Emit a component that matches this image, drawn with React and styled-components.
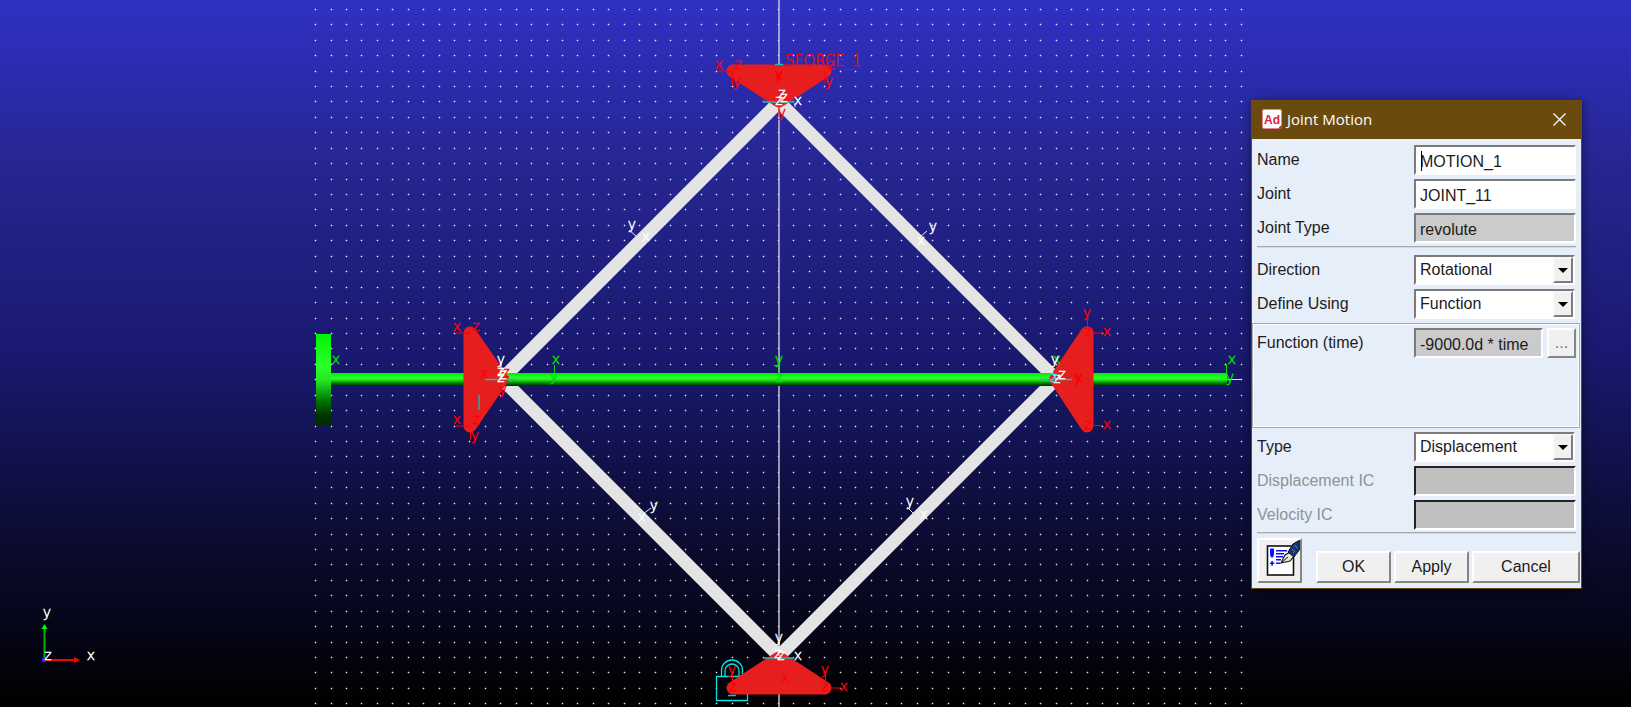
import React, { useId } from 'react';
import styled, { createGlobalStyle } from 'styled-components';

const GlobalStyle = createGlobalStyle`
  * { box-sizing: border-box; }
  body { margin: 0; background: #000; }
`;

const sans = '"Liberation Sans", Arial, sans-serif';

const Workspace = styled.main`
  position: relative;
  min-height: 100vh;
  background: linear-gradient(#3030c4 0%, #25258f 25%, #191970 50%, #0c0c34 75%, #000 100%);
  overflow: hidden;
`;

const Scene = styled.svg`
  display: block;
  width: 100%;
  height: 100vh;
  font-family: "DejaVu Sans", sans-serif;
  font-weight: 200;
`;

/* ---------- dialog ---------- */

const Dialog = styled.form`
  position: absolute;
  top: 100px;
  right: 49px;
  width: 331px;
  border: 1px solid #6b4a0e;
  background: #e6eff9;
  box-shadow: 0 2px 10px rgba(0, 0, 0, 0.5);
  color: #1c1c1c;
  font: 16px/20px ${sans};
`;

const TitleBar = styled.header`
  display: flex;
  align-items: center;
  gap: 5px;
  height: 38px;
  padding: 0 10px 2px;
  background: #6b4a0e;
  color: #fff;
`;

const Title = styled.h1`
  flex: 1;
  margin: 0;
  font: 400 15px/20px "Open Sans", "Noto Sans", sans-serif;
`;

const CloseButton = styled.button`
  display: grid;
  place-items: center;
  width: 24px;
  height: 24px;
  padding: 0;
  border: 0;
  background: none;
  color: #fff;
`;

const Section = styled.section`
  display: grid;
  gap: 4px;
  padding: ${(p) => p.$pad};
`;

const Group = styled.section`
  height: 105px;
  margin-right: 1px;
  padding: 4px 3px 4px 4px;
  border: 1px solid #a8acb2;
  outline: 1px solid #fbfdff;
  outline-offset: -2px;
`;

const Row = styled.div`
  display: grid;
  grid-template-columns: 157px 1fr;
  align-items: center;
  height: 30px;
`;

const Label = styled.label`
  color: ${(p) => (p.$dim ? '#8f9296' : 'inherit')};
`;

const FieldBox = styled.input`
  width: 100%;
  min-width: 0;
  height: 30px;
  padding: 4px 4px 0;
  border: 2px solid;
  border-color: ${(p) => (p.$dim ? '#222 #fff #fff #222' : '#7b7b7b #fff #fff #7b7b7b')};
  border-radius: 0;
  outline: 0;
  background: ${(p) => (p.$dim ? '#c0c0c0' : p.readOnly ? '#cbcbcb' : '#fff')};
  color: #1c1c1c;
  font: 16px/20px ${sans};
`;

const CaretFrame = styled.div`
  position: relative;
  height: 30px;

  &::before {
    content: '';
    position: absolute;
    top: 6px;
    left: 7px;
    width: 1px;
    height: 20px;
    background: #000;
  }
`;

const SelectFrame = styled.div`
  position: relative;
  height: 30px;
  margin-right: 1px;
  border: 2px solid;
  border-color: #7b7b7b #fff #fff #7b7b7b;
  background: #fff;
`;

const SelectBox = styled.select`
  appearance: none;
  width: 100%;
  height: 26px;
  padding: 0 24px 0 4px;
  border: 0;
  outline: 0;
  background: transparent;
  color: #1c1c1c;
  font: 16px/20px ${sans};
`;

const Arrow = styled.span`
  position: absolute;
  top: 0;
  right: 0;
  display: grid;
  place-items: center;
  width: 20px;
  height: 26px;
  border: 2px solid;
  border-color: #f6f6f6 #7d7d7d #7d7d7d #f6f6f6;
  background: #f0f0f0;
  pointer-events: none;

  &::before {
    content: '';
    border: 5px solid transparent;
    border-top-color: #000;
    border-bottom-width: 0;
  }
`;

const FieldWithButton = styled.div`
  display: grid;
  grid-template-columns: 1fr 29px;
  gap: 4px;
`;

const PushButton = styled.button`
  display: grid;
  place-items: center;
  width: ${(p) => p.$width || 'auto'};
  height: ${(p) => p.$height || '32px'};
  padding: 0;
  border: 2px solid;
  border-color: #fff #858585 #858585 #fff;
  border-radius: 0;
  background: #f0f0f0;
  color: ${(p) => p.$color || '#1c1c1c'};
  font: 16px/20px ${sans};
`;

const Divider = styled.hr`
  height: 2px;
  margin: 0 5px;
  border: 0;
  border-top: 1px solid #a4a7ab;
  border-bottom: 1px solid #d4d9df;
`;

const Footer = styled.footer`
  display: flex;
  align-items: flex-end;
  gap: 3px;
  padding: 4px 1px 5px 5px;
`;

const Spacer = styled.span`
  flex: 1;
`;

function TextRow({ label, value, readOnly, dim, caret }) {
  const id = useId();
  const field = (
    <FieldBox id={id} defaultValue={value} readOnly={readOnly} disabled={dim} $dim={dim} />
  );
  return (
    <Row>
      <Label htmlFor={id} $dim={dim}>{label}</Label>
      {caret ? <CaretFrame>{field}</CaretFrame> : field}
    </Row>
  );
}

function SelectRow({ label, options }) {
  const id = useId();
  return (
    <Row>
      <Label htmlFor={id}>{label}</Label>
      <SelectFrame>
        <SelectBox id={id}>
          {options.map((o) => <option key={o}>{o}</option>)}
        </SelectBox>
        <Arrow />
      </SelectFrame>
    </Row>
  );
}

const AdIcon = () => (
  <svg width="20" height="20" viewBox="0 0 20 20" aria-hidden="true">
    <rect x="0.5" y="0.5" width="19" height="19" rx="1.5" fill="#fff" stroke="#e9848f" />
    <path d="M19.5 16v3.5H16z" fill="#c8102e" />
    <text x="10" y="15" textAnchor="middle" fontFamily={sans} fontWeight="700" fontSize="12" fill="#d3223c">Ad</text>
  </svg>
);

const NoteIcon = () => (
  <svg width="41" height="41" viewBox="0 0 41 41" aria-hidden="true">
    <rect x="8.5" y="6" width="26" height="29" fill="#fff" stroke="#111" strokeWidth="1.6" />
    <g fill="#1010ff">
      <path d="M11 8.500h4v6l-1 3h-2l-1-3z" />
      <path d="M12.300 21h1.600v1.600h1.400v1.500h-1.400v1.600h-1.600v-1.600H11v-1.500h1.300z" />
      <path d="M17 10h11v1.500H17zM17 13h8v1.500h-8zM17 16h7v1.500h-7zM17 19h5v1.500h-5zM17 22.500h4V24h-4z" />
    </g>
    <path d="M22 23l4-8 5-3 4 4-4 5z" fill="#eceade" stroke="#111" strokeWidth="1.1" />
    <path d="M22 23l7-6" stroke="#111" />
    <path d="M29 12l5-8 7-4v9l-6 8z" fill="#17356d" stroke="#0a0f1e" strokeWidth="1" />
    <path d="M33 9l2 2M36 5l2 3M34 13l2-2" stroke="#5f86bf" />
  </svg>
);

function JointMotionDialog() {
  const fnId = useId();
  return (
    <Dialog onSubmit={(e) => e.preventDefault()}>
      <TitleBar>
        <AdIcon />
        <Title>Joint Motion</Title>
        <CloseButton type="button" aria-label="Close">
          <svg width="13" height="13" viewBox="0 0 13 13">
            <path d="M0.5 0.5l12 12M12.5 0.5l-12 12" stroke="currentColor" strokeWidth="1.2" />
          </svg>
        </CloseButton>
      </TitleBar>
      <Section $pad="6px 5px 3px">
        <TextRow label="Name" value="MOTION_1" caret />
        <TextRow label="Joint" value="JOINT_11" />
        <TextRow label="Joint Type" value="revolute" readOnly />
      </Section>
      <Divider />
      <Section $pad="7px 5px 4px">
        <SelectRow label="Direction" options={['Rotational', 'Translational']} />
        <SelectRow label="Define Using" options={['Function', 'Spline']} />
      </Section>
      <Group>
        <Row>
          <Label htmlFor={fnId}>Function (time)</Label>
          <FieldWithButton>
            <FieldBox id={fnId} defaultValue="-9000.0d * time" readOnly />
            <PushButton type="button" $height="30px" $color="#777">...</PushButton>
          </FieldWithButton>
        </Row>
      </Group>
      <Section $pad="4px 5px 2px">
        <SelectRow label="Type" options={['Displacement', 'Velocity', 'Acceleration']} />
        <TextRow label="Displacement IC" dim />
        <TextRow label="Velocity IC" dim />
      </Section>
      <Divider />
      <Footer>
        <PushButton type="button" aria-label="Comments" $width="45px" $height="45px"><NoteIcon /></PushButton>
        <Spacer />
        <PushButton type="submit" $width="75px">OK</PushButton>
        <PushButton type="button" $width="75px">Apply</PushButton>
        <PushButton type="button" $width="108px">Cancel</PushButton>
      </Footer>
    </Dialog>
  );
}

/* ---------- model view ---------- */

const GRID = 15.43;
const gridDots = [];
for (let r = 0; r < 46; r += 1) {
  for (let c = 0; c <= 60; c += 1) {
    gridDots.push([Math.floor(315.6 + c * GRID), Math.floor(9.4 + r * GRID)]);
  }
}
const dotPath = gridDots.map(([x, y]) => `M${x} ${y}h1v1h-1z`).join('');
const haloPath = gridDots.map(([x, y]) => `M${x - 1} ${y}h3v1h-3zM${x} ${y - 1}h1v3h-1z`).join('');

const RED = '#ff0000';
const GREEN = '#00e000';
const WHITE = '#ffffff';
const CYAN = '#00e5e5';

const CONES = [
  '733,71 825,71 779,101',
  '470,333 470,426 502,379',
  '1087,333 1087,426 1056,379',
  '733,688 825,688 779,658',
];

/* axis letters: [letter, x, baseline, colour] */
const MARKS = [
  ['x', 719, 69, RED], ['z', 738, 69, RED], ['y', 737, 86, RED], ['z', 831, 69, RED],
  ['y', 829, 86, RED], ['y', 779, 79, RED], ['x', 779, 80, RED], ['y', 782, 117, RED],
  ['z', 782, 98, WHITE], ['z', 784, 102, WHITE], ['z', 779, 105, WHITE],
  ['x', 798, 105, WHITE],
  ['x', 457, 331, RED], ['z', 476, 331, RED], ['x', 457, 424, RED], ['z', 476, 424, RED],
  ['y', 475, 440, RED], ['x', 484, 378, RED], ['z', 506, 377, RED], ['y', 503, 394, RED],
  ['y', 501, 364, WHITE], ['z', 501, 376, WHITE], ['z', 503, 379, WHITE], ['z', 501, 382, WHITE],
  ['y', 1087, 317, RED], ['x', 1107, 336, RED], ['z', 1088, 336, RED],
  ['x', 1107, 429, RED], ['z', 1088, 429, RED], ['x', 1079, 383, RED], ['y', 1078, 382, RED],
  ['x', 1057, 364, GREEN], ['y', 1055, 364, WHITE],
  ['z', 1062, 379, WHITE], ['z', 1057, 383, WHITE], ['z', 1054, 382, CYAN],
  ['x', 336, 364, GREEN], ['x', 556, 364, GREEN], ['y', 554, 381, GREEN],
  ['x', 1232, 364, GREEN], ['y', 1230, 382, GREEN],
  ['y', 779, 364, GREEN], ['z', 779, 382, GREEN],
  ['y', 632, 229, WHITE], ['x', 646, 241, WHITE], ['y', 933, 231, WHITE], ['x', 921, 245, WHITE],
  ['y', 654, 510, WHITE], ['x', 642, 522, WHITE], ['y', 910, 506, WHITE], ['x', 924, 519, WHITE],
  ['y', 779, 642, WHITE], ['z', 778, 658, WHITE], ['z', 781, 660, WHITE], ['x', 798, 660, WHITE],
  ['y', 732, 674, RED], ['z', 733, 691, RED], ['y', 825, 674, RED], ['z', 825, 691, RED],
  ['x', 844, 691, RED], ['x', 785, 682, RED],
  ['y', 47, 617, WHITE], ['z', 48, 660, WHITE], ['x', 91, 660, WHITE],
];

function ModelView() {
  return (
    <Scene viewBox="0 0 1631 707" preserveAspectRatio="xMidYMid meet" role="img" aria-label="Linkage model">
      <defs>
        <linearGradient id="rod" x1="0" y1="0" x2="0" y2="1">
          <stop offset="0" stopColor="#00ec00" />
          <stop offset="0.4" stopColor="#2cff2c" />
          <stop offset="0.58" stopColor="#14d814" />
          <stop offset="0.8" stopColor="#007000" />
          <stop offset="1" stopColor="#002c00" />
        </linearGradient>
        <linearGradient id="disc" x1="0" y1="0" x2="0" y2="1">
          <stop offset="0" stopColor="#00f400" />
          <stop offset="0.35" stopColor="#2cff2c" />
          <stop offset="0.5" stopColor="#22e822" />
          <stop offset="0.75" stopColor="#006a00" />
          <stop offset="0.9" stopColor="#003000" />
          <stop offset="1" stopColor="#002c00" />
        </linearGradient>
      </defs>
      <g shapeRendering="crispEdges" fill="#fff">
        <path d={haloPath} opacity="0.24" />
        <path d={dotPath} opacity="0.85" />
      </g>

      <path d="M779 0V707" stroke="#c3c3d6" strokeWidth="1.500" />
      <path d="M1227 379.500H1242" stroke="#ddd" />
      <path d="M779 102L502 379L779 656L1056 379Z" fill="none" stroke="#e4e4e4" strokeWidth="13" />
      <rect x="316" y="334" width="15" height="92" fill="url(#disc)" />
      <rect x="331" y="373" width="896" height="13" fill="url(#rod)" />
      <g stroke="#00e5e5" strokeWidth="1.300" fill="none">
        <path d="M716.500 676.500h31v24h-31zM721.500 676v-6a10.500 10 0 0 1 21 0v6M725 676v-5a7 7 0 0 1 14 0v5" />
      </g>
      <g fill="#e61e1e" stroke="#e61e1e" strokeWidth="13" strokeLinejoin="round">
        {CONES.map((c) => <polygon key={c} points={c} />)}
      </g>

      <g stroke="#16bdc4" strokeWidth="1.300" fill="none">
        <path d="M775 64.500h8M763 102h31M485 379.500h31M479 395v15M1041 379.500h31M763 658h31M728 695.500h8" />
      </g>

      <g stroke="#f00" fill="none">
        <path d="M732 71H717M732.500 71v14M825 71v12M779 104v13M470 333H456M470 426H456M470.500 432v8M1093 333h10M1093 425.500h10M1087.500 327v-12M732.500 688v-13M825.500 688v-13M831 688h10" />
      </g>
      <g stroke="#00e000" fill="none">
        <path d="M1226.500 373V364M554.500 381v-16M774 365.500h5v8" />
      </g>
      <g stroke="#eee" fill="none">
        <path d="M501 379v-16M1056 379l-7-13M779 656v-14M636 236l-7-6M920 237l7-6M643 514l8-6M914 514l-7-7M795 107v-4" />
      </g>
      <path d="M44.500 659V627" stroke="#00b400" strokeWidth="2" />
      <path d="M41.500 629l3-5 3 5z" fill="#0f0" />
      <path d="M45 660H76" stroke="#f00" strokeWidth="2" />
      <path d="M74 657l6 3-6 3z" fill="#f00" />
      <rect x="42" y="658" width="4" height="4" fill="#22f" />

      <g fontSize="14" textAnchor="middle" strokeWidth="0.5">
        {MARKS.map(([t, x, y, color]) => (
          <text key={`${t}${x}-${y}`} x={x} y={y} fill={color} stroke={color}>{t}</text>
        ))}
      </g>
      <text x="785" y="66" fontSize="15" fill="#f00" stroke="#f00" strokeWidth="0.3">SFORCE_1</text>
    </Scene>
  );
}

export default function App() {
  return (
    <Workspace>
      <GlobalStyle />
      <ModelView />
      <JointMotionDialog />
    </Workspace>
  );
}
